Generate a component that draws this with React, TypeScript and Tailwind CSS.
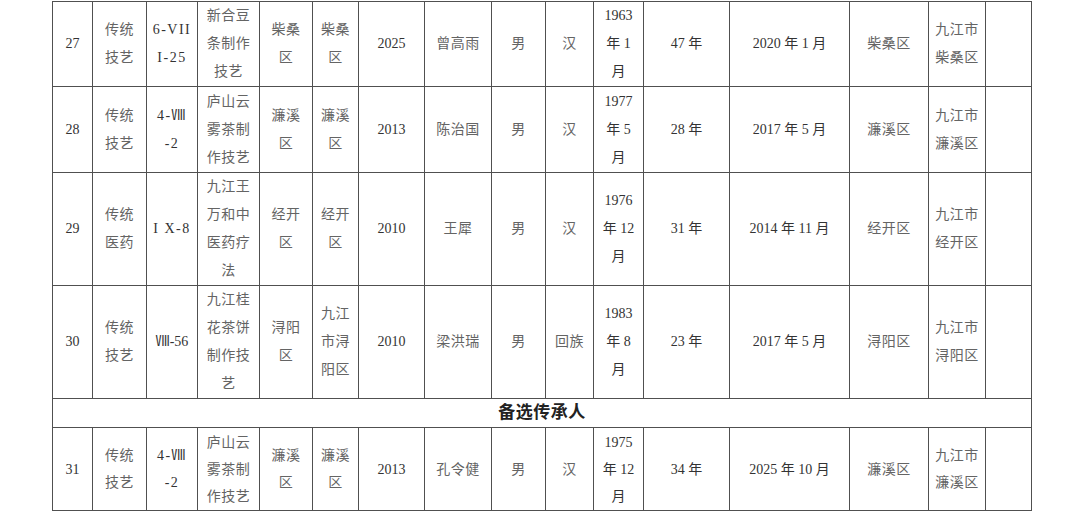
type Cell = string | string[];

const widths = [40, 54, 51, 62, 53, 46, 66, 67, 54, 48, 50, 86, 120, 79, 57, 46];

const rows: { h: string; cells: Cell[] }[] = [
  {
    h: "h-[85px]",
    cells: [
      "27",
      ["传统", "技艺"],
      ["6-VII", "I-25"],
      ["新合豆", "条制作", "技艺"],
      ["柴桑", "区"],
      ["柴桑", "区"],
      "2025",
      "曾高雨",
      "男",
      "汉",
      ["1963", "年 1", "月"],
      "47 年",
      "2020 年 1 月",
      "柴桑区",
      ["九江市", "柴桑区"],
      "",
    ],
  },
  {
    h: "h-[86px]",
    cells: [
      "28",
      ["传统", "技艺"],
      ["4-Ⅷ", "-2"],
      ["庐山云", "雾茶制", "作技艺"],
      ["濂溪", "区"],
      ["濂溪", "区"],
      "2013",
      "陈治国",
      "男",
      "汉",
      ["1977", "年 5", "月"],
      "28 年",
      "2017 年 5 月",
      "濂溪区",
      ["九江市", "濂溪区"],
      "",
    ],
  },
  {
    h: "h-[112px]",
    cells: [
      "29",
      ["传统", "医药"],
      "I X-8",
      ["九江王", "万和中", "医药疗", "法"],
      ["经开", "区"],
      ["经开", "区"],
      "2010",
      "王犀",
      "男",
      "汉",
      ["1976", "年 12", "月"],
      "31 年",
      "2014 年 11 月",
      "经开区",
      ["九江市", "经开区"],
      "",
    ],
  },
  {
    h: "h-[113px]",
    cells: [
      "30",
      ["传统", "技艺"],
      "Ⅷ-56",
      ["九江桂", "花茶饼", "制作技", "艺"],
      ["浔阳", "区"],
      ["九江", "市浔", "阳区"],
      "2010",
      "梁洪瑞",
      "男",
      "回族",
      ["1983", "年 8", "月"],
      "23 年",
      "2017 年 5 月",
      "浔阳区",
      ["九江市", "浔阳区"],
      "",
    ],
  },
];

const lastRow: Cell[] = [
  "31",
  ["传统", "技艺"],
  ["4-Ⅷ", "-2"],
  ["庐山云", "雾茶制", "作技艺"],
  ["濂溪", "区"],
  ["濂溪", "区"],
  "2013",
  "孔令健",
  "男",
  "汉",
  ["1975", "年 12", "月"],
  "34 年",
  "2025 年 10 月",
  "濂溪区",
  ["九江市", "濂溪区"],
  "",
];

function isCjk(s: string) {
  return !/[0-9A-Za-zⅧ]/.test(s);
}

function isCode(s: string) {
  return /[VIX]|^-\d$/.test(s);
}

function Td({ cell, tight }: { cell: Cell; tight?: boolean }) {
  const lines = Array.isArray(cell) ? cell : [cell];
  const cjk = lines.every(isCjk);
  const code = lines.some(isCode);
  return (
    <td
      className={`border border-[#505050] p-0 text-center align-middle text-[14px] ${
        tight ? "leading-[27px]" : "leading-[28px]"
      } ${
        cjk
          ? "text-[#646464] tracking-[0.5px]"
          : code
            ? "text-[#333] tracking-[1.5px]"
            : "text-[#333]"
      }`}
    >
      {lines.map((l, i) => (
        <div key={i} className="whitespace-pre">
          {l}
        </div>
      ))}
    </td>
  );
}

export default function App() {
  return (
    <div
      className="w-[1080px] h-[511px] bg-white pl-[52px] pt-px overflow-hidden"
      style={{ fontFamily: '"Liberation Serif", "Noto Sans CJK SC", serif' }}
    >
      <table className="table-fixed border-collapse w-[980px]">
        <colgroup>
          {widths.map((w, i) => (
            <col key={i} style={{ width: w }} />
          ))}
        </colgroup>
        <tbody>
          {rows.map((r, i) => (
            <tr key={i} className={r.h}>
              {r.cells.map((c, j) => (
                <Td key={j} cell={c} />
              ))}
            </tr>
          ))}
          <tr className="h-[29px]">
            <td
              colSpan={16}
              className="border border-[#505050] p-0 text-center align-middle leading-[20px] text-[17px] font-bold text-[#222] tracking-[0.5px]"
            >
              备选传承人
            </td>
          </tr>
          <tr className="h-[83px]">
            {lastRow.map((c, j) => (
              <Td key={j} cell={c} tight />
            ))}
          </tr>
        </tbody>
      </table>
    </div>
  );
}
